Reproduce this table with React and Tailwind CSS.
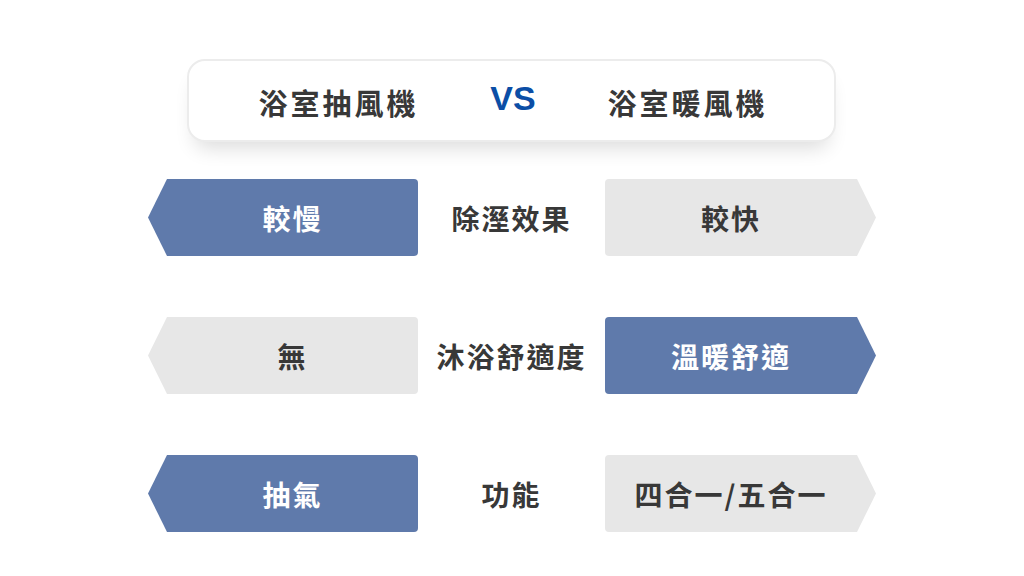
const rows = [
  { left: '較慢', leftOn: true, label: '除溼效果', right: '較快', rightOn: false },
  { left: '無', leftOn: false, label: '沐浴舒適度', right: '溫暖舒適', rightOn: true },
  { left: '抽氣', leftOn: true, label: '功能', right: '四合一/五合一', rightOn: false },
];

const font = { fontFamily: '"Noto Sans CJK TC", "Noto Sans CJK SC", sans-serif' };

function LeftTag({ text, on }) {
  return (
    <div
      className={`h-[77px] flex items-center justify-center pl-[19px] rounded-r-[4px] [clip-path:polygon(19px_0,100%_0,100%_100%,19px_100%,0_50%)] ${on ? 'bg-[#5f7aab] text-white' : 'bg-[#e7e7e7] text-[#383838]'}`}
    >
      <span className="text-[28px] font-bold tracking-[2px]">{text}</span>
    </div>
  );
}

function RightTag({ text, on }) {
  return (
    <div
      className={`h-[77px] flex items-center justify-center pr-[19px] rounded-l-[4px] [clip-path:polygon(0_0,calc(100%-19px)_0,100%_50%,calc(100%-19px)_100%,0_100%)] ${on ? 'bg-[#5f7aab] text-white' : 'bg-[#e7e7e7] text-[#383838]'}`}
    >
      <span className="text-[28px] font-bold tracking-[2px]">{text}</span>
    </div>
  );
}

export default function App() {
  return (
    <div className="w-[1024px] h-[576px] bg-white flex flex-col items-center pt-[59px]" style={font}>
      <div className="w-[649px] h-[83px] rounded-[18px] border-2 border-[#ececec] bg-white shadow-[0_14px_20px_-8px_rgba(0,0,0,0.14)] grid grid-cols-[300px_49px_300px] items-center -translate-x-[1px]">
        <div className="text-center text-[29px] font-bold text-[#383838] tracking-[3px] pt-[4px]">浴室抽風機</div>
        <div className="text-center text-[34px] font-bold text-[#0b4ea6] leading-none -mt-[6px]" style={{ fontFamily: '"Liberation Sans", Arial, sans-serif' }}>VS</div>
        <div className="text-center text-[29px] font-bold text-[#383838] tracking-[3px] pt-[4px]">浴室暖風機</div>
      </div>

      <div className="flex flex-col gap-[61px] mt-[37px]">
        {rows.map((r) => (
          <div key={r.label} className="grid grid-cols-[270px_187px_271px] items-center">
            <LeftTag text={r.left} on={r.leftOn} />
            <div className="text-center text-[28px] font-bold text-[#383838] tracking-[2px]">{r.label}</div>
            <RightTag text={r.right} on={r.rightOn} />
          </div>
        ))}
      </div>
    </div>
  );
}
